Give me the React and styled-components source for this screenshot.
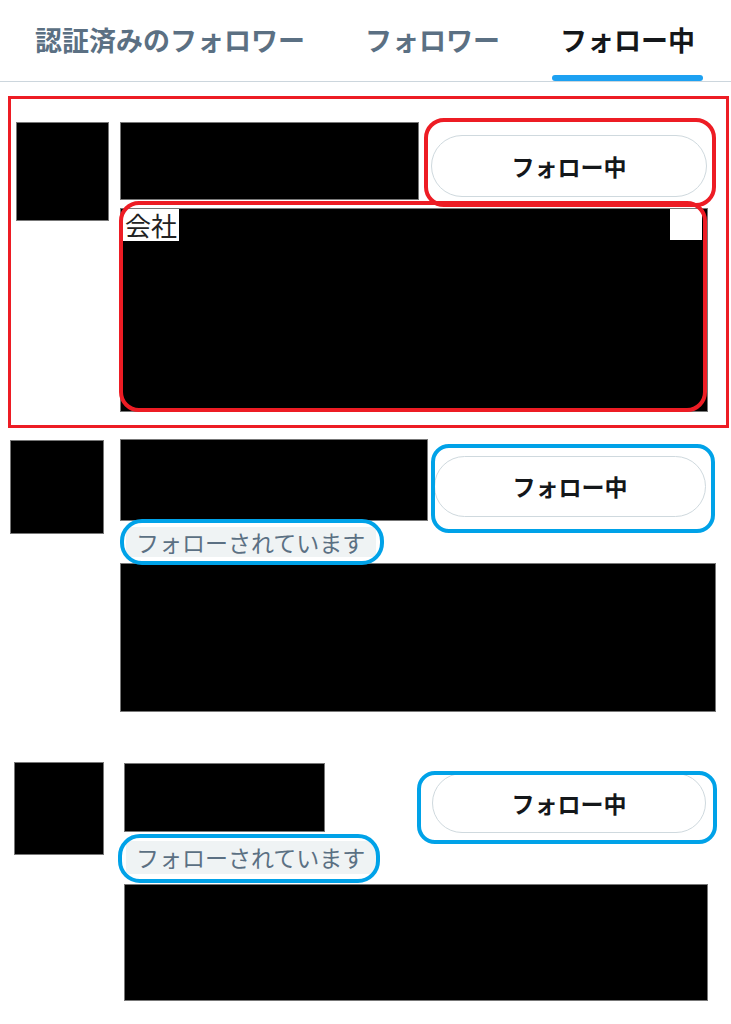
import styled, { createGlobalStyle, css } from 'styled-components'

const RED = '#ed1c24'
const BLUE = '#00a2e8'
const FONT = '"Noto Sans CJK JP", "Noto Sans", sans-serif'

const GlobalStyle = createGlobalStyle`
  body {
    margin: 0;
    background: #fff;
    font-family: ${FONT};
  }
`

// hand-drawn highlight ring around a part
const annotate = ({ $mark }) =>
  $mark &&
  css`
    position: relative;

    &::after {
      content: '';
      position: absolute;
      inset: ${$mark.inset};
      border: 4px solid ${$mark.color};
      border-radius: ${$mark.radius}px;
      pointer-events: none;
      z-index: 2;
    }
  `

const Page = styled.div`
  width: 731px;
  height: 1024px;
  overflow: hidden;
  background: #fff;
`

const TabBar = styled.nav`
  display: flex;
  gap: 44px;
  height: 81px;
  padding-left: 27px;
  border-bottom: 1px solid #ccd6dd;
`

const Tab = styled.div`
  display: flex;
  flex-direction: column;
  color: ${(p) => (p.$active ? '#14171a' : '#5b7083')};
`

const TabLabel = styled.span`
  padding: 21px 8px 0;
  font-size: 27px;
  font-weight: 700;
  line-height: 38px;
  white-space: nowrap;
`

const Indicator = styled.span`
  margin-top: auto;
  height: 6px;
  border-radius: 3px;
  background: ${(p) => (p.$active ? '#1da1f2' : 'transparent')};
`

const Frame = styled.div`
  margin: 14px 2px 0 8px;
  padding: 23px 0 13px 5px;
  border: 3px solid ${RED};
`

const Row = styled.div`
  display: flex;
  align-items: flex-start;
  padding-left: ${(p) => p.$left}px;
  margin-top: ${(p) => p.$top}px;
`

const Redacted = styled.div`
  flex: none;
  box-sizing: border-box;
  width: ${(p) => p.$w}px;
  height: ${(p) => p.$h}px;
  background: #000;
  border: 1px solid #777;
`

const Avatar = styled(Redacted)`
  margin-top: ${(p) => p.$dy || 0}px;
  margin-right: ${(p) => p.$gap}px;
`

const Content = styled.div`
  display: flex;
  flex-direction: column;
  align-items: flex-start;
  margin-top: ${(p) => p.$dy || 0}px;
`

const TopLine = styled.div`
  display: flex;
  align-items: flex-start;
  width: ${(p) => p.$w}px;
`

const FollowButton = styled.button`
  display: flex;
  align-items: center;
  justify-content: center;
  box-sizing: border-box;
  width: ${(p) => p.$w}px;
  height: ${(p) => p.$h}px;
  margin: ${(p) => p.$dy}px 0 0 auto;
  padding: 0;
  border: 1.5px solid #cfd9de;
  border-radius: 999px;
  background: #fff;
  color: #14171a;
  font-family: ${FONT};
  font-size: 23px;
  font-weight: 700;
  line-height: 1;
  ${annotate}
`

const Badge = styled.span`
  display: inline-flex;
  align-items: center;
  height: ${(p) => p.$h}px;
  margin: ${(p) => p.$dy}px 0 0 ${(p) => p.$dx}px;
  padding: 0 11px 0 10px;
  border-radius: 4px;
  background: #eff3f4;
  color: #5b7083;
  font-size: 23px;
  line-height: 1;
  white-space: nowrap;
  ${annotate}
`

const Bio = styled.div`
  display: flex;
  align-items: flex-start;
  box-sizing: border-box;
  width: ${(p) => p.$w}px;
  height: ${(p) => p.$h}px;
  margin: ${(p) => p.$dy}px 0 0 ${(p) => p.$dx || 0}px;
  background: #000;
  border: 1px solid #777;
  ${annotate}
`

const BioLabel = styled.span`
  margin-left: 2px;
  padding: 0 2px;
  background: #fff;
  color: #222;
  font-size: 26px;
  line-height: 32px;
`

const BioPatch = styled.span`
  width: 32px;
  height: 31px;
  margin: 0 5px 0 auto;
  background: #fff;
`

const tabs = [
  { label: '認証済みのフォロワー' },
  { label: 'フォロワー' },
  { label: 'フォロー中', active: true },
]

const rows = [
  {
    left: 0,
    top: 0,
    avatar: { w: 93, h: 99, gap: 11 },
    name: { w: 299, h: 78 },
    lineW: 587,
    button: { w: 276, h: 62, dy: 13, mark: { color: RED, inset: '-18px -10px -11px -8px', radius: 20 } },
    bio: {
      w: 588,
      h: 204,
      dy: 8,
      label: '会社',
      mark: { color: RED, inset: '-8px 0 -1px -2px', radius: 20 },
    },
  },
  {
    left: 10,
    top: 11,
    avatar: { w: 94, h: 94, gap: 16, dy: 1 },
    name: { w: 308, h: 82 },
    lineW: 586,
    button: { w: 272, h: 61, dy: 17, mark: { color: BLUE, inset: '-13px -10px -17px -4px', radius: 18 } },
    badge: { h: 30, dy: 6, dx: 6, mark: { color: BLUE, inset: '-8px -8px -8px -6px', radius: 22 } },
    bio: { w: 596, h: 149, dy: 6 },
  },
  {
    left: 14,
    top: 50,
    avatar: { w: 90, h: 93, gap: 20 },
    content: 1,
    name: { w: 201, h: 69 },
    lineW: 582,
    button: { w: 274, h: 60, dy: 10, mark: { color: BLUE, inset: '-3px -12px -12px -16px', radius: 18 } },
    badge: { h: 33, dy: 8, dx: 2, mark: { color: BLUE, inset: '-7px -4px -9px -8px', radius: 22 } },
    bio: { w: 584, h: 117, dy: 10 },
  },
]

const UserRow = ({ row }) => (
  <Row $left={row.left} $top={row.top}>
    <Avatar $w={row.avatar.w} $h={row.avatar.h} $gap={row.avatar.gap} $dy={row.avatar.dy} />
    <Content $dy={row.content}>
      <TopLine $w={row.lineW}>
        <Redacted $w={row.name.w} $h={row.name.h} />
        <FollowButton $w={row.button.w} $h={row.button.h} $dy={row.button.dy} $mark={row.button.mark}>
          フォロー中
        </FollowButton>
      </TopLine>
      {row.badge && (
        <Badge $h={row.badge.h} $dy={row.badge.dy} $dx={row.badge.dx} $mark={row.badge.mark}>
          フォローされています
        </Badge>
      )}
      <Bio $w={row.bio.w} $h={row.bio.h} $dy={row.bio.dy} $mark={row.bio.mark}>
        {row.bio.label && (
          <>
            <BioLabel>{row.bio.label}</BioLabel>
            <BioPatch />
          </>
        )}
      </Bio>
    </Content>
  </Row>
)

export default function App() {
  const [first, ...rest] = rows
  return (
    <Page>
      <GlobalStyle />
      <TabBar>
        {tabs.map((t) => (
          <Tab key={t.label} $active={t.active}>
            <TabLabel>{t.label}</TabLabel>
            <Indicator $active={t.active} />
          </Tab>
        ))}
      </TabBar>
      <Frame>
        <UserRow row={first} />
      </Frame>
      {rest.map((row, i) => (
        <UserRow key={i} row={row} />
      ))}
    </Page>
  )
}
